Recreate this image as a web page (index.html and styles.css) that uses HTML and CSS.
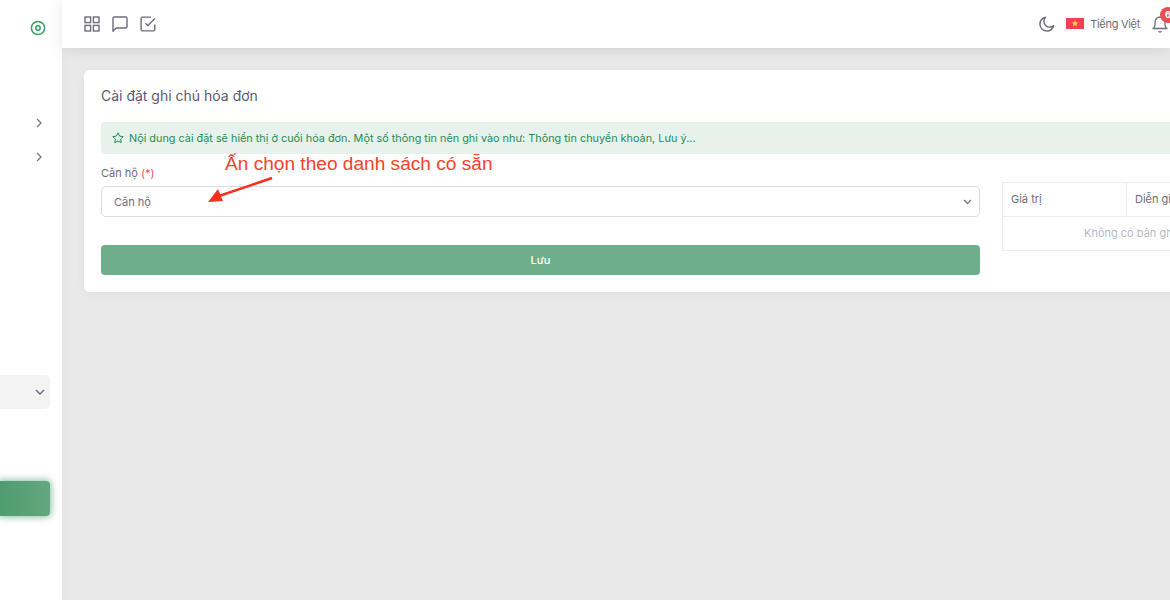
FILE: index.html
```html
<!DOCTYPE html>
<html lang="en">
<head>
  <meta charset="UTF-8">
  <meta name="viewport" content="width=device-width, initial-scale=1.0">
  <title>Cài đặt ghi chú hóa đơn</title>
  <link rel="stylesheet" href="styles.css">
</head>
<body>
  <aside class="sidebar">
    <div class="logo">
      <svg width="16" height="16" viewBox="0 0 16 16" fill="none" stroke="#2f9e63" stroke-width="1.5"><circle cx="8" cy="8" r="6.6"/><circle cx="8" cy="8" r="2.2"/></svg>
    </div>
    <div class="side-row first">
      <svg class="chev" width="8" height="10" viewBox="0 0 8 10" fill="none" stroke="#77778a" stroke-width="1.3"><path d="M2 1l4 4-4 4"/></svg>
    </div>
    <div class="side-row">
      <svg class="chev" width="8" height="10" viewBox="0 0 8 10" fill="none" stroke="#77778a" stroke-width="1.3"><path d="M2 1l4 4-4 4"/></svg>
    </div>
    <div class="side-open">
      <svg width="10" height="8" viewBox="0 0 10 8" fill="none" stroke="#6b6b7b" stroke-width="1.4"><path d="M1 2l4 4 4-4"/></svg>
    </div>
    <div class="side-active"></div>
  </aside>

  <div class="main">
    <header class="topbar">
      <div class="top-icons">
        <svg width="16" height="16" viewBox="0 0 16 16" fill="none" stroke="#6e6b7b" stroke-width="1.4"><rect x="1" y="1" width="5.6" height="5.6"/><rect x="9.4" y="1" width="5.6" height="5.6"/><rect x="1" y="9.4" width="5.6" height="5.6"/><rect x="9.4" y="9.4" width="5.6" height="5.6"/></svg>
        <svg width="16" height="16" viewBox="0 0 16 16" fill="none" stroke="#6e6b7b" stroke-width="1.4" stroke-linejoin="round"><path d="M1 2.5C1 1.7 1.7 1 2.5 1h11c.8 0 1.5.7 1.5 1.5v8c0 .8-.7 1.5-1.5 1.5H4.2L1 15.2z"/></svg>
        <svg width="16" height="16" viewBox="0 0 16 16" fill="none" stroke="#6e6b7b" stroke-width="1.4" stroke-linejoin="round"><path d="M14.8 8.5v5c0 .8-.6 1.4-1.4 1.4H2.5c-.8 0-1.4-.6-1.4-1.4V2.5c0-.8.6-1.4 1.4-1.4h8.5"/><path d="M5.5 7.2l2.4 2.4 7-7"/></svg>
      </div>
      <div class="top-right">
        <svg class="moon" width="16" height="16" viewBox="0 0 16 16" fill="none" stroke="#6e6b7b" stroke-width="1.4" stroke-linejoin="round"><path d="M14.8 9.4A7 7 0 1 1 6.6 1.2a5.6 5.6 0 0 0 8.2 8.2z"/></svg>
        <svg class="flag" width="18" height="11" viewBox="0 0 18 11"><rect width="18" height="11" fill="#f4404f"/><path d="M9 2l.9 2.5h2.6l-2.1 1.6.8 2.5L9 7.100l-2.200 1.500.8-2.500-2.100-1.600h2.600z" fill="#ffd84a"/></svg>
        <span class="lang">Tiếng Việt</span>
        <div class="bell">
          <svg width="16" height="18" viewBox="0 0 16 18" fill="none" stroke="#6e6b7b" stroke-width="1.3" stroke-linejoin="round"><path d="M1 13.500c1.400-1 2-2.200 2-4V7a5 5 0 0 1 10 0v2.500c0 1.800.6 3 2 4z"/><path d="M6.500 16.200c.8.800 2.200.800 3 0"/></svg>
          <span class="badge">6</span>
        </div>
      </div>
    </header>

    <section class="content">
      <div class="card">
        <h1 class="card-title">Cài đặt ghi chú hóa đơn</h1>
        <div class="notice">
          <svg width="12" height="12" viewBox="0 0 12 12" fill="none" stroke="#1f8a53" stroke-width="1" stroke-linejoin="round"><path d="M6 .8l1.600 3.300 3.600.5-2.600 2.500.6 3.600L6 9l-3.200 1.700.6-3.600L.8 4.600l3.600-.5z"/></svg>
          <span>Nội dung cài đặt sẽ hiển thị ở cuối hóa đơn. Một số thông tin nên ghi vào như: Thông tin chuyển khoản, Lưu ý...</span>
        </div>
        <div class="columns">
          <div class="form-col">
            <label class="field-label">Căn hộ <span class="req">(*)</span></label>
            <div class="select">
              <span>Căn hộ</span>
              <svg width="9" height="6" viewBox="0 0 9 6" fill="none" stroke="#6e6b7b" stroke-width="1.2"><path d="M1 1l3.500 3.500L8 1"/></svg>
            </div>
            <button class="save-btn">Lưu</button>
          </div>
          <div class="table-col">
            <div class="t-head">
              <div class="t-cell value">Giá trị</div>
              <div class="t-cell">Diễn giải</div>
            </div>
            <div class="t-empty">Không có bản ghi</div>
          </div>
        </div>
      </div>
    </section>
  </div>

  <!-- annotation drawn over the screenshot -->
  <div class="note-text">Ấn chọn theo danh sách có sẵn</div>
  <svg class="note-arrow" width="70" height="30" viewBox="0 0 70 30"><path d="M65 2L12 20" stroke="#f5301e" stroke-width="2.4"/><path d="M1 26l10-13 5 12z" fill="#f5301e"/></svg>
</body>
</html>
```

FILE: styles.css
```css
html, body {
  height: 100%;
}
body {
  margin: 0;
  display: flex;
  overflow: hidden;
  font-family: Inter, "Liberation Sans", sans-serif;
  font-size: 11px;
  color: #6e6b7b;
  background: #e9e9e9;
}
.sidebar {
  width: 62px;
  flex: none;
  height: 600px;
  background: #fff;
  display: flex;
  flex-direction: column;
  overflow: hidden;
}
.logo {
  height: 16px;
  margin-top: 20px;
  padding-left: 30px;
}
.logo svg, .side-row svg, .side-open svg {
  display: block;
}
.side-row {
  height: 34px;
  display: flex;
  align-items: center;
  justify-content: flex-end;
  padding-right: 19px;
}
.side-row.first {
  margin-top: 70px;
}
.side-open {
  width: 50px;
  height: 34px;
  margin-top: 201px;
  background: #f3f3f3;
  border-radius: 0 5px 5px 0;
  display: flex;
  align-items: center;
  justify-content: flex-end;
  padding-right: 5px;
  box-sizing: border-box;
}
.side-active {
  width: 50px;
  height: 35px;
  margin-top: 72px;
  background: linear-gradient(to right, #4f9c70, #64a67f);
  border-radius: 0 4px 4px 0;
  box-shadow: 0 0 7px 1px rgba(80, 160, 115, 0.7);
}
.main {
  flex: 1;
  min-width: 0;
  display: flex;
  flex-direction: column;
  box-shadow: inset 8px 0 8px -8px rgba(0,0,0,0.04);
}
.topbar {
  height: 48px;
  flex: none;
  background: #fff;
  display: flex;
  align-items: center;
  justify-content: space-between;
  padding: 0 2px 0 22px;
  box-shadow: 0 2px 14px rgba(0,0,0,0.1);
}
.top-icons {
  display: flex;
  gap: 12px;
  margin-bottom: 1px;
}
.top-icons svg {
  display: block;
}
.top-right {
  display: flex;
  align-items: center;
  margin-bottom: 1px;
}
.moon {
  margin-right: 11px;
}
.flag {
  margin-right: 6px;
}
.lang {
  font-size: 11px;
  margin-right: 12px;
  letter-spacing: -0.3px;
}
.bell {
  position: relative;
  width: 16px;
  height: 18px;
}
.bell svg {
  display: block;
}
.badge {
  position: absolute;
  top: -8px;
  left: 8px;
  width: 16px;
  height: 16px;
  border-radius: 50%;
  background: #ea4f4f;
  color: #fff;
  font-size: 9px;
  font-weight: 700;
  line-height: 16px;
  padding-left: 5px;
  box-sizing: border-box;
}
.content {
  flex: 1;
  padding: 22px 0 0 22px;
  min-width: 0;
}
.card {
  width: 1300px;
  height: 222px;
  box-sizing: border-box;
  background: #fff;
  border-radius: 6px;
  padding: 17px;
  box-shadow: 0 2px 10px rgba(0,0,0,0.05);
}
.card-title {
  margin: 0;
  font-size: 14px;
  line-height: 18px;
  font-weight: 400;
  color: #5e5873;
}
.notice {
  display: flex;
  align-items: center;
  gap: 5px;
  height: 32px;
  box-sizing: border-box;
  margin-top: 17px;
  padding-left: 11px;
  background: #e8f2ec;
  border-radius: 4px;
  color: #1f8a53;
  font-size: 10.85px;
}
.columns {
  display: flex;
  gap: 22px;
  margin-top: 12px;
}
.form-col {
  width: 879px;
  flex: none;
}
.field-label {
  display: block;
  font-size: 11px;
  line-height: 14px;
}
.req {
  color: #ea4f4f;
}
.select {
  height: 31px;
  box-sizing: border-box;
  margin-top: 6px;
  padding: 0 7px 0 12px;
  border: 1px solid #dcdce2;
  border-radius: 5px;
  display: flex;
  align-items: center;
  justify-content: space-between;
  font-size: 11px;
}
.save-btn {
  display: block;
  width: 100%;
  height: 30px;
  margin-top: 28px;
  border: none;
  border-radius: 4px;
  background: #6fae8a;
  color: #fff;
  font-family: inherit;
  font-size: 11px;
  font-weight: 500;
}
.table-col {
  width: 320px;
  flex: none;
  height: 69px;
  box-sizing: border-box;
  margin-top: 16px;
  border: 1px solid #ececf0;
}
.t-head {
  display: flex;
  height: 33px;
  border-bottom: 1px solid #ececf0;
}
.t-cell {
  padding-left: 8px;
  line-height: 33px;
}
.t-cell.value {
  width: 115px;
  border-right: 1px solid #ececf0;
}
.t-empty {
  line-height: 32px;
  padding-left: 81px;
  color: #b9b9c3;
}
.note-text {
  position: absolute;
  left: 225px;
  top: 153px;
  font-family: "Liberation Sans", sans-serif;
  font-size: 19.1px;
  line-height: 22px;
  color: #f5402e;
}
.note-arrow {
  position: absolute;
  left: 207px;
  top: 176px;
}
```
